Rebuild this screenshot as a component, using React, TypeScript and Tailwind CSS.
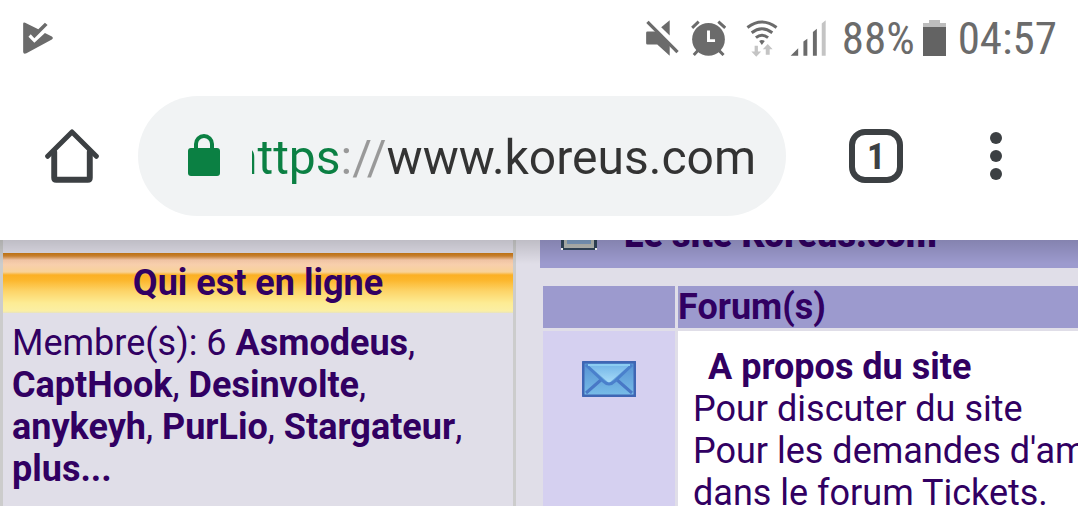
import type { ReactNode } from 'react';

const members = ['Asmodeus', 'CaptHook', 'Desinvolte', 'anykeyh', 'PurLio', 'Stargateur'];

function PlayCheckIcon() {
  return (
    <svg viewBox="69 62 90 97" className="h-8 w-[30px]" fill="#6b6b6b">
      <path d="M69 67q0-5 6-3l40 20 20-20 8 7-40 40-11-12-7 8 18 18 32-30 21 11q6 5 0 9l-77 42q-9 4-10-4z" />
    </svg>
  );
}

function MuteIcon() {
  return (
    <svg viewBox="45 56 100 110" className="h-9 w-[33px]" fill="#6b6b6b">
      <path d="M45 95q0-4 4-4h24l44 40v34l-38-34H49q-4 0-4-4z" />
      <path d="M117 57v46L91 78z" />
      <path d="M49 62l92 92" stroke="#6b6b6b" strokeWidth="10" />
    </svg>
  );
}

function AlarmIcon() {
  return (
    <svg viewBox="184 56 106 110" className="h-9 w-[35px]" fill="none" stroke="#6b6b6b" strokeWidth="9">
      <circle cx="237" cy="115" r="50" fill="#6b6b6b" stroke="none" />
      <path d="M187 80l20-19M267 61l21 19M206 148l-14 15M268 148l15 15" />
      <path d="M237 88v31h20" stroke="#fff" />
    </svg>
  );
}

function WifiIcon() {
  return (
    <svg viewBox="353 53 95 113" className="h-[37px] w-8" fill="none" stroke="#6b6b6b" strokeWidth="9">
      <path d="M356 76q44-34 89 0M369 92q31-24 63 0M382 107q18-15 37 0" />
      <path d="M392 117q8-6 17 0l-9 12z" fill="#6b6b6b" stroke="none" />
      <path d="M378 132h10v17h10l-15 16-15-16h10zM412 159v-17h-9l15-16 15 16h-9v17z" fill="#c4c4c4" stroke="none" />
    </svg>
  );
}

function SignalIcon() {
  return (
    <svg viewBox="486 56 108 110" className="h-9 w-9" fill="#6b6b6b">
      <path d="M487 165l23-23v23zM526 165v-43l12-9v52zM555 165V93l12-10v82z" />
      <path d="M582 165V67l12-10v108z" fill="#c4c4c4" />
    </svg>
  );
}

function BatteryIcon() {
  return (
    <svg viewBox="0 0 23 36" className="h-9 w-[23px]">
      <path d="M6 0h11v3h6v5H0V3h6z" fill="#bdbdbd" />
      <path d="M0 7h23v29H0z" fill="#636363" />
    </svg>
  );
}

function HomeIcon() {
  return (
    <svg viewBox="135 386 162 164" className="h-[54px] w-[54px]" fill="none" stroke="#3c4043" strokeLinejoin="round" strokeLinecap="round">
      <path d="M142 469l74-74 74 74" strokeWidth="15" />
      <path d="M162 456v78q0 6 6 6h96q6 0 6-6v-78" strokeWidth="18" />
    </svg>
  );
}

function LockIcon() {
  return (
    <svg viewBox="0 0 32 42" className="mb-[2px] h-[42px] w-8 shrink-0">
      <rect y="14" width="32" height="28" rx="3" fill="#0b8043" />
      <path d="M8 15V10a8 8 0 0 1 16 0v5" fill="none" stroke="#0b8043" strokeWidth="4" />
    </svg>
  );
}

function EnvelopeIcon() {
  return (
    <svg viewBox="0 0 54 36" className="mx-auto h-9 w-[54px]">
      <defs>
        <linearGradient id="mail" x1="0" y1="0" x2="0" y2="1">
          <stop offset="0" stopColor="#5590d2" />
          <stop offset="1" stopColor="#78bde8" />
        </linearGradient>
        <linearGradient id="flap" x1="0" y1="0" x2="0" y2="1">
          <stop offset="0" stopColor="#74b6e8" />
          <stop offset="1" stopColor="#a8dcf8" />
        </linearGradient>
      </defs>
      <rect x="1" y="1" width="52" height="34" rx="1" fill="url(#mail)" stroke="#3f66b4" strokeWidth="3" />
      <path d="M4 32l16-14M50 32L34 18" stroke="#4878c6" strokeWidth="3" />
      <path d="M6 4l21 18L48 4z" fill="url(#flap)" />
      <path d="M4 4l17 16q6 6 12 0L50 4" fill="none" stroke="#4a80cc" strokeWidth="3" />
      <path d="M6 4h42" stroke="#8ccdf2" strokeWidth="2" />
    </svg>
  );
}

function CategoryIcon() {
  return (
    <svg viewBox="0 0 36 36" className="h-9 w-9 shrink-0">
      <rect width="36" height="36" fill="#33475c" />
      <rect x="3" width="30" height="34" fill="#b9bdb8" />
      <rect x="6" y="3" width="24" height="27" fill="#7f9fc4" />
      <path d="M0 34h2v2H0zM34 34h2v2h-2z" fill="#fff" />
    </svg>
  );
}

function StatusBar() {
  return (
    <div className="flex h-[76px] items-center pl-[23px] pr-[21px] text-[45px] leading-none text-[#6b6b6b] font-['Roboto_Condensed','Liberation_Sans_Narrow',Roboto,sans-serif]">
      <PlayCheckIcon />
      <div className="ml-auto flex items-center">
        <MuteIcon />
        <div className="ml-3 mr-5"><AlarmIcon /></div>
        <WifiIcon />
        <div className="ml-3 mr-4"><SignalIcon /></div>
        <span>88%</span>
        <div className="ml-2 mr-3"><BatteryIcon /></div>
        <span>04:57</span>
      </div>
    </div>
  );
}

function Toolbar() {
  return (
    <div className="flex h-40 items-center pl-[45px] pr-[73px]">
      <button aria-label="Accueil" className="shrink-0"><HomeIcon /></button>
      <div className="ml-[39px] flex h-[120px] min-w-0 flex-1 items-center rounded-full bg-[#f1f3f4] pl-[50px] pr-[30px]">
        <LockIcon />
        <div className="ml-8 flex min-w-0 flex-1 justify-end overflow-hidden pt-1">
          <input
            type="text"
            aria-label="Adresse"
            defaultValue="https://www.koreus.com"
            className="w-[540px] shrink-0 bg-[linear-gradient(90deg,#0b8043_125px,#999_125px,#999_172px,#333_172px)] bg-clip-text text-right text-[48px] leading-[60px] text-transparent outline-none"
          />
        </div>
      </div>
      <button className="ml-[63px] flex size-[54px] shrink-0 items-center justify-center rounded-2xl border-6 border-[#3c4043] pt-[2px] text-[36px] font-bold leading-none text-[#3c4043] font-['Roboto_Condensed',Roboto,sans-serif]">
        1
      </button>
      <button aria-label="Menu" className="ml-[84px] flex w-[18px] shrink-0 flex-col items-center gap-[6px]">
        <span className="size-3 rounded-full bg-[#3c4043]" />
        <span className="size-3 rounded-full bg-[#3c4043]" />
        <span className="size-3 rounded-full bg-[#3c4043]" />
      </button>
    </div>
  );
}

function PageLink({ children }: { children: ReactNode }) {
  return <a href="#" className="font-bold">{children}</a>;
}

function OnlineBlock() {
  return (
    <aside className="w-[516px] shrink-0 border-x-[3px] border-[#ccc] pt-[53px]">
      <h2 className="h-[60px] bg-[linear-gradient(#c97a14_0px,#d08530_3px,#f5c8a8_7px,#f8cfac_12px,#f8d298_19px,#fbb024_22px,#fcb62c_27px,#fdd468_38px,#fdec94_50px,#fbefa4_58px,#e8e2c0_60px)] pt-[9px] text-center font-bold">
        Qui est en ligne
      </h2>
      <p className="px-[9px] pt-[9px]">
        Membre(s): 6{' '}
        {members.map((name) => (
          <span key={name}><PageLink>{name}</PageLink>, </span>
        ))}
        <PageLink>plus...</PageLink>
      </p>
    </aside>
  );
}

function ForumList() {
  return (
    <section className="ml-6 min-w-0 flex-1 overflow-hidden">
      <div className="flex h-[68px] items-start bg-[#9c9ace] pl-[21px] pt-[14px]">
        <CategoryIcon />
        <h2 className="ml-[27px] font-black">Le site Koreus.com</h2>
      </div>
      <table className="mt-[15px] w-full border-separate border-spacing-[3px] text-left">
        <thead>
          <tr className="bg-[#9c9ace]">
            <th className="p-0" />
            <th className="p-0 font-bold">Forum(s)</th>
          </tr>
        </thead>
        <tbody>
          <tr>
            <td className="min-w-[132px] bg-[#d5d0f0] p-0 pt-[30px] align-top"><EnvelopeIcon /></td>
            <td className="w-full whitespace-nowrap bg-white py-[15px] pl-[15px] pr-0">
              <div className="pl-[15px]"><PageLink>A propos du site</PageLink></div>
              Pour discuter du site<br />
              Pour les demandes d'am<br />
              dans le forum Tickets.
            </td>
          </tr>
        </tbody>
      </table>
    </section>
  );
}

export default function App() {
  return (
    <div className="h-screen overflow-hidden bg-[#e0dee8] font-[Roboto,sans-serif] text-[36px] leading-[42px] text-[#310062]">
      <header className="relative z-10 bg-white pb-1">
        <StatusBar />
        <Toolbar />
        <div className="absolute inset-x-0 top-full h-6 bg-linear-to-b from-black/15 to-transparent" />
      </header>
      <main className="-mt-10 flex min-h-full">
        <OnlineBlock />
        <ForumList />
      </main>
    </div>
  );
}
